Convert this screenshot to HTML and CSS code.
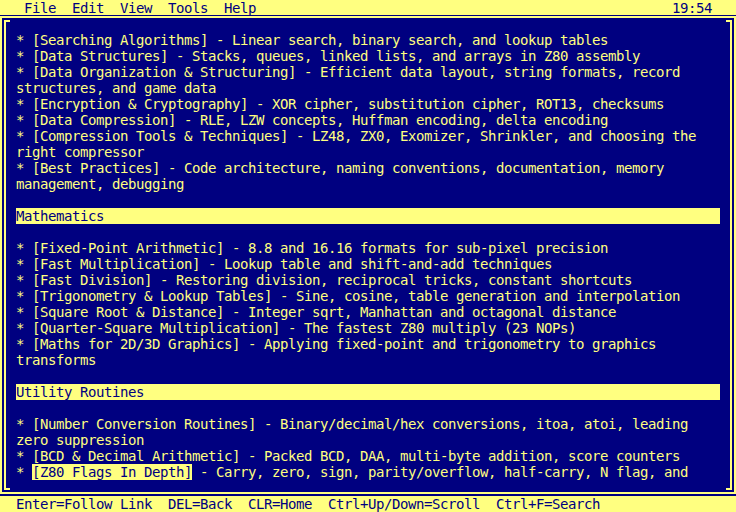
FILE: index.html
```html
<!DOCTYPE html>
<html>
<head>
<meta charset="utf-8">
<link rel="stylesheet" href="styles.css">
</head>
<body>
<div class="screen">
  <div class="menubar"><span class="menu">File  Edit  View  Tools  Help</span><span class="clock">19:54</span></div>
  <div class="frame">
    <div class="inner">
      <div class="content">
<div class="row">* [Searching Algorithms] - Linear search, binary search, and lookup tables</div>
<div class="row">* [Data Structures] - Stacks, queues, linked lists, and arrays in Z80 assembly</div>
<div class="row">* [Data Organization &amp; Structuring] - Efficient data layout, string formats, record</div>
<div class="row">structures, and game data</div>
<div class="row">* [Encryption &amp; Cryptography] - XOR cipher, substitution cipher, ROT13, checksums</div>
<div class="row">* [Data Compression] - RLE, LZW concepts, Huffman encoding, delta encoding</div>
<div class="row">* [Compression Tools &amp; Techniques] - LZ48, ZX0, Exomizer, Shrinkler, and choosing the</div>
<div class="row">right compressor</div>
<div class="row">* [Best Practices] - Code architecture, naming conventions, documentation, memory</div>
<div class="row">management, debugging</div>
<div class="row"> </div>
<div class="row header">Mathematics</div>
<div class="row"> </div>
<div class="row">* [Fixed-Point Arithmetic] - 8.8 and 16.16 formats for sub-pixel precision</div>
<div class="row">* [Fast Multiplication] - Lookup table and shift-and-add techniques</div>
<div class="row">* [Fast Division] - Restoring division, reciprocal tricks, constant shortcuts</div>
<div class="row">* [Trigonometry &amp; Lookup Tables] - Sine, cosine, table generation and interpolation</div>
<div class="row">* [Square Root &amp; Distance] - Integer sqrt, Manhattan and octagonal distance</div>
<div class="row">* [Quarter-Square Multiplication] - The fastest Z80 multiply (23 NOPs)</div>
<div class="row">* [Maths for 2D/3D Graphics] - Applying fixed-point and trigonometry to graphics</div>
<div class="row">transforms</div>
<div class="row"> </div>
<div class="row header">Utility Routines</div>
<div class="row"> </div>
<div class="row">* [Number Conversion Routines] - Binary/decimal/hex conversions, itoa, atoi, leading</div>
<div class="row">zero suppression</div>
<div class="row">* [BCD &amp; Decimal Arithmetic] - Packed BCD, DAA, multi-byte addition, score counters</div>
<div class="row">* <span class="selected">[Z80 Flags In Depth]</span> - Carry, zero, sign, parity/overflow, half-carry, N flag, and</div>
      </div>
    </div>
  </div>
  <div class="statusbar">Enter=Follow Link  DEL=Back  CLR=Home  Ctrl+Up/Down=Scroll  Ctrl+F=Search</div>
</div>
</body>
</html>
```
FILE: styles.css
```css
html, body {
  margin: 0;
  padding: 0;
  background: #000080;
}

.screen {
  width: 736px;
  height: 512px;
  display: flex;
  flex-direction: column;
  background: #000080;
  color: #ffff80;
  font-family: "DejaVu Sans Mono", "Liberation Mono", monospace;
  font-size: 14px;
  letter-spacing: -0.43px;
  line-height: 16px;
  overflow: hidden;
}

.menubar {
  box-sizing: border-box;
  height: 15px;
  margin-bottom: 1px;
  background: #ffff80;
  color: #000080;
  display: flex;
  justify-content: space-between;
  align-items: flex-start;
  padding: 1px 24px 0 24px;
  white-space: pre;
  line-height: 14px;
}

.frame {
  flex: 1;
  border: 2px solid #ffff80;
  padding: 2px;
  margin-bottom: 2px;
  display: flex;
  flex-direction: column;
}

.inner {
  flex: 1;
  position: relative;
  border-left: 2px solid #ffff80;
  border-right: 2px solid #ffff80;
  padding: 12px 10px 0 10px;
}

.inner::before,
.inner::after {
  content: "";
  position: absolute;
  top: 0;
  bottom: 0;
  width: 4px;
  border-top: 2px solid #ffff80;
  border-bottom: 2px solid #ffff80;
}

.inner::before {
  left: 0;
}

.inner::after {
  right: 0;
}

.content {
  display: flex;
  flex-direction: column;
}

.row {
  box-sizing: border-box;
  height: 16px;
  padding-top: 1px;
  line-height: 15px;
  white-space: pre;
}

.header {
  background: #ffff80;
  color: #000080;
}

.selected {
  background: #ffff80;
  color: #000080;
}

.statusbar {
  box-sizing: border-box;
  height: 16px;
  background: #ffff80;
  color: #000080;
  padding: 0 16px;
  white-space: pre;
  line-height: 16px;
}
```
